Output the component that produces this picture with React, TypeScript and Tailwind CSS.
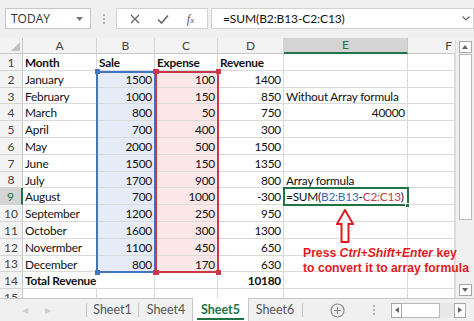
import React from 'react';

const W = ['w-[74px]', 'w-[58px]', 'w-[63px]', 'w-[66px]', 'w-[124px]', 'w-[47px]'];
const HEAD = ['A', 'B', 'C', 'D', 'E', 'F'];

type Cell = string | number | null;
const rows: Cell[][] = [
  ['Month', 'Sale', 'Expense', 'Revenue', null, null],
  ['January', 1500, 100, 1400, null, null],
  ['February', 1000, 150, 850, 'Without Array formula', null],
  ['March', 800, 50, 750, 40000, null],
  ['April', 700, 400, 300, null, null],
  ['May', 2000, 500, 1500, null, null],
  ['June', 1500, 150, 1350, null, null],
  ['July', 1700, 900, 800, 'Array formula', null],
  ['August', 700, 1000, -300, 'FORMULA', null],
  ['September', 1200, 250, 950, null, null],
  ['October', 1600, 300, 1300, null, null],
  ['Novermber', 1100, 450, 650, null, null],
  ['December', 800, 170, 630, null, null],
  ['Total Revenue', null, null, 10180, null, null],
  [null, null, null, null, null, null],
];

function Formula() {
  return (
    <span>
      =SUM(<span className="text-[#3c6cc0]">B2:B13</span>-<span className="text-[#c23a4a]">C2:C13</span>)
    </span>
  );
}

function Row({ r, i }: { r: Cell[]; i: number }) {
  const n = i + 1;
  const sel = n === 9;
  return (
    <div className="flex h-[16.8px] shrink-0">
      <div
        className={
          'w-[23px] shrink-0 flex items-center justify-center pt-[2px] border-b border-[#d4d4d4] text-[12px] tracking-normal ' +
          (sel
            ? 'bg-[#d4d4d4] text-[#217346] border-r-2 border-r-[#217346]'
            : 'bg-[#f3f3f3] text-[#444] border-r border-r-[#c8c8c8]')
        }
      >
        {n}
      </div>
      {r.map((c, j) => {
        const isNum = typeof c === 'number';
        const inRange = n >= 2 && n <= 13;
        const fill = inRange && j === 1 ? 'bg-[#e5ecf8]' : inRange && j === 2 ? 'bg-[#fbe7e7]' : 'bg-white';
        const overflow = (n === 14 && j === 0) || c === 'FORMULA';
        return (
          <div
            key={j}
            className={
              W[j] +
              ' shrink-0 flex items-center pt-[2px] px-[2px] border-b border-[#dadada] whitespace-nowrap ' +
              (n === 14 && j === 0 ? 'overflow-visible relative z-10 ' : overflow ? 'border-r overflow-visible ' : 'border-r overflow-hidden ') +
              fill +
              (isNum ? ' justify-end' : ' justify-start') +
              (n === 1 || n === 14 ? ' font-bold' : '')
            }
          >
            {c === 'FORMULA' ? <Formula /> : c}
          </div>
        );
      })}
    </div>
  );
}

function Corners({ color, l, t, w, h }: { color: string; l: number; t: number; w: number; h: number }) {
  const pts = [
    [l, t],
    [l + w, t],
    [l, t + h],
    [l + w, t + h],
  ];
  return (
    <>
      {pts.map(([x, y], k) => (
        <div
          key={k}
          className={'absolute w-[5px] h-[5px] z-20 ' + color}
          style={{ left: x - 2.5, top: y - 2.5 }}
        />
      ))}
    </>
  );
}

export default function App() {
  return (
    <div
      className="w-[474px] h-[321px] overflow-hidden bg-white text-[#111] flex flex-col"
      style={{ fontFamily: 'Lato, "Open Sans", sans-serif', fontSize: '11.8px', letterSpacing: '-0.2px' }}
    >
      {/* formula bar */}
      <div className="h-[38px] shrink-0 bg-[#f0f0f0] flex items-center pl-[5px] pb-[1px] tracking-normal">
        <div className="w-[86px] h-[21px] bg-white border border-[#c6c6c6] flex items-center justify-between pl-[5px] pr-[7px] text-[12px] text-[#333]" style={{ fontFamily: '"Open Sans", sans-serif' }}>
          <span>TODAY</span>
          <svg width="7" height="4" viewBox="0 0 7 4"><path d="M0 0 L7 0 L3.5 4 Z" fill="#777" /></svg>
        </div>
        <div className="w-[25px] flex flex-col items-center gap-[2px]">
          <div className="w-[2px] h-[2px] bg-[#b0b0b0]" />
          <div className="w-[2px] h-[2px] bg-[#b0b0b0]" />
          <div className="w-[2px] h-[2px] bg-[#b0b0b0]" />
        </div>
        <div className="w-[92px] h-[21px] bg-white border border-[#d2d2d2] flex items-center justify-around px-[4px]">
          <svg width="10" height="10" viewBox="0 0 10 10"><path d="M1 1 L9 9 M9 1 L1 9" stroke="#666" strokeWidth="1.3" /></svg>
          <svg width="12" height="10" viewBox="0 0 12 10"><path d="M1 5.5 L4.5 9 L11 1.5" stroke="#666" strokeWidth="1.6" fill="none" /></svg>
          <span className="text-[#555] italic text-[12px]" style={{ fontFamily: '"Liberation Serif", serif' }}>
            f<span className="text-[9px]">x</span>
          </span>
        </div>
        <div className="ml-[3px] flex-1 h-[21px] bg-white border border-[#d2d2d2] flex items-center justify-between pl-[11px] pr-[3px] text-[12px]" style={{ letterSpacing: '-0.1px' }}>
          <span>=SUM(B2:B13-C2:C13)</span>
          <svg width="8" height="5" viewBox="0 0 8 5"><path d="M0.5 0.5 L4 4 L7.5 0.5" stroke="#666" strokeWidth="1.2" fill="none" /></svg>
        </div>
      </div>

      {/* sheet area */}
      <div className="h-[260px] shrink-0 flex overflow-hidden relative">
        <div className="w-[455px] shrink-0 relative flex flex-col overflow-hidden">
          {/* column headers */}
          <div className="flex h-[16px] shrink-0 bg-[#f3f3f3] text-[12px] text-[#444] tracking-normal">
            <div className="w-[23px] shrink-0 border-r border-b border-[#c8c8c8] relative">
              <svg className="absolute right-[2px] bottom-[2px]" width="9" height="9" viewBox="0 0 9 9"><path d="M9 0 L9 9 L0 9 Z" fill="#c2c2c2" /></svg>
            </div>
            {HEAD.map((h, j) => (
              <div
                key={h}
                className={
                  W[j] +
                  ' shrink-0 flex items-center justify-center ' +
                  (h === 'E'
                    ? 'bg-[#d4d4d4] text-[#217346] border-b-2 border-b-[#217346] border-r border-r-[#c8c8c8]'
                    : 'border-r border-[#d4d4d4] border-b border-b-[#c8c8c8]') +
                  (h === 'F' ? ' justify-end pr-[3px] border-r-0' : '')
                }
              >
                {h}
              </div>
            ))}
          </div>
          {rows.map((r, i) => (
            <Row key={i} r={r} i={i} />
          ))}
        </div>

        {/* range highlights */}
        <div className="absolute left-[96px] top-[32.8px] w-[60px] h-[202.6px] border-2 border-[#4472c4] z-20" />
        <Corners color="bg-[#4472c4]" l={97} t={33.8} w={58} h={200.6} />
        <div className="absolute left-[155px] top-[32.8px] w-[64px] h-[202.6px] border-2 border-[#c8384a] z-20" />
        <Corners color="bg-[#c8384a]" l={156} t={33.8} w={62} h={200.6} />

        {/* active cell */}
        <div className="absolute left-[283px] top-[149.4px] w-[126px] h-[18.8px] border-2 border-[#217346] z-20" />
        <div className="absolute left-[405px] top-[165px] w-[5px] h-[5px] bg-[#217346] border border-white z-30" />

        {/* arrow */}
        <svg className="absolute left-[336px] top-[171px] z-30" width="18" height="34" viewBox="0 0 18 34">
          <path d="M9 1 L17 15 L12.5 15 L12.5 33 L5.5 33 L5.5 15 L1 15 Z" fill="white" stroke="#e21b23" strokeWidth="2" strokeLinejoin="miter" />
        </svg>

        {/* annotation */}
        <div
          className="absolute left-[303px] top-[208px] z-30 text-[#e21b23] font-bold text-[12.2px] leading-[15px] whitespace-nowrap tracking-normal"
          style={{ fontFamily: '"Liberation Sans", Arial, sans-serif' }}
        >
          <div>
            Press <i>Ctrl+Shift+Enter</i> key
          </div>
          <div>to convert it to array formula</div>
        </div>

        {/* vertical scrollbar */}
        <div className="flex-1 flex flex-col">
          <div className="h-[2px] bg-[#f3f3f3]" />
          <div className="flex-1 flex flex-col items-center bg-[#f0f0f0] border-l border-[#dcdcdc] pt-[1px] pb-[2px]">
            <div className="w-[13px] h-[12px] bg-white border border-[#a8a8a8] flex items-center justify-center">
              <svg width="6" height="4" viewBox="0 0 6 4"><path d="M0 4 L3 0 L6 4 Z" fill="#666" /></svg>
            </div>
            <div className="w-[13px] h-[166px] mt-[1px] bg-white border border-[#b8b8b8]" />
            <div className="flex-1" />
            <div className="w-[13px] h-[12px] bg-white border border-[#a8a8a8] flex items-center justify-center">
              <svg width="6" height="4" viewBox="0 0 6 4"><path d="M0 0 L6 0 L3 4 Z" fill="#666" /></svg>
            </div>
          </div>
        </div>
      </div>

      {/* sheet tabs */}
      <div className="flex-1 bg-[#f0f0f0] border-t border-[#c6c6c6] flex items-stretch text-[12.5px] text-[#555] tracking-normal">
        <div className="w-[86px] shrink-0 flex items-center pl-[22px] gap-[17px] text-[8px] text-[#cfcfcf]">
          <span>◀</span>
          <span>▶</span>
        </div>
        <div className="w-[1px] my-[4px] bg-[#c6c6c6]" />
        <div className="w-[51px] flex items-center justify-center pt-[1px]">Sheet1</div>
        <div className="w-[1px] my-[4px] bg-[#c6c6c6]" />
        <div className="w-[54px] flex items-center justify-center pt-[1px]">Sheet4</div>
        <div className="w-[55px] bg-white flex flex-col items-center justify-center pt-[2px] -mt-[1px] shadow-[1px_0_0_#c6c6c6,-1px_0_0_#c6c6c6]">
          <span className="font-bold text-[#217346] border-b-2 border-[#217346] px-[4px] leading-[17px]">Sheet5</span>
        </div>
        <div className="w-[54px] flex items-center justify-center pt-[1px]">Sheet6</div>
        <div className="w-[1px] my-[4px] bg-[#c6c6c6]" />
        <div className="w-[66px] flex items-center justify-center pl-[2px]">
          <svg width="15" height="15" viewBox="0 0 15 15">
            <circle cx="7.5" cy="7.5" r="6.5" fill="none" stroke="#8a8a8a" strokeWidth="1.2" />
            <path d="M7.5 4 V11 M4 7.5 H11" stroke="#8a8a8a" strokeWidth="1.2" />
          </svg>
        </div>
        <div className="w-[10px] flex flex-col items-center justify-center gap-[2px]">
          <div className="w-[2px] h-[2px] bg-[#b0b0b0]" />
          <div className="w-[2px] h-[2px] bg-[#b0b0b0]" />
          <div className="w-[2px] h-[2px] bg-[#b0b0b0]" />
        </div>
        <div className="ml-[12px] w-[75px] flex items-center">
          <div className="h-[15px] w-full flex bg-[#e8e8e8]">
            <div className="w-[11px] bg-white border border-[#a8a8a8] flex items-center justify-center">
              <svg width="4" height="6" viewBox="0 0 4 6"><path d="M4 0 L0 3 L4 6 Z" fill="#666" /></svg>
            </div>
            <div className="w-[38px] bg-white border border-[#b8b8b8] border-l-0" />
            <div className="flex-1" />
            <div className="w-[12px] bg-white border border-[#a8a8a8] flex items-center justify-center">
              <svg width="4" height="6" viewBox="0 0 4 6"><path d="M0 0 L4 3 L0 6 Z" fill="#666" /></svg>
            </div>
          </div>
        </div>
      </div>
    </div>
  );
}
